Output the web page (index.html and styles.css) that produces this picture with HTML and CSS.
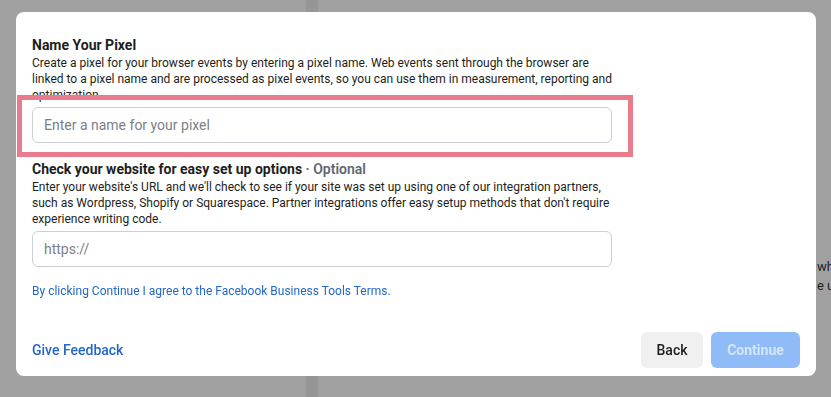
FILE: index.html
```html
<!DOCTYPE html>
<html>
<head>
<meta charset="utf-8">
<link rel="stylesheet" href="styles.css">
</head>
<body>
<div class="backdrop">
  <div class="left-area"></div>
  <div class="strip"></div>
  <div class="main-area">
    <p class="behind">wh<br>e u</p>
  </div>
</div>

<div class="modal">
  <div class="modal-body">
    <h2 class="heading">Name Your Pixel</h2>
    <p class="desc">Create a pixel for your browser events by entering a pixel name. Web events sent through the browser are linked to a pixel name and are processed as pixel events, so you can use them in measurement, reporting and optimization.</p>
    <div class="field"><input class="input" type="text" placeholder="Enter a name for your pixel"></div>

    <h2 class="heading heading-2">Check your website for easy set up options <span class="optional">· Optional</span></h2>
    <p class="desc">Enter your website's URL and we'll check to see if your site was set up using one of our integration partners, such as Wordpress, Shopify or Squarespace. Partner integrations offer easy setup methods that don't require experience writing code.</p>
    <div class="field"><input class="input" type="text" placeholder="https://"></div>

    <p class="terms">By clicking Continue I agree to the Facebook Business Tools Terms.</p>
  </div>
  <div class="modal-footer">
    <a class="feedback">Give Feedback</a>
    <div class="actions">
      <button class="btn btn-back">Back</button>
      <button class="btn btn-continue">Continue</button>
    </div>
  </div>
  <div class="highlight"></div>
</div>
</body>
</html>
```

FILE: styles.css
```css
* { box-sizing: border-box; }
html, body {
  margin: 0;
  padding: 0;
  height: 100%;
  overflow: hidden;
}
body {
  background: #a0a0a0;
  font-family: Roboto, "Liberation Sans", Arial, sans-serif;
  color: #1c1e21;
}
.backdrop {
  display: flex;
  height: 397px;
}
.left-area {
  width: 306px;
  flex: none;
}
.strip {
  width: 12px;
  flex: none;
  background: #969696;
}
.main-area {
  flex: 1;
  padding-left: 499px;
  padding-top: 257px;
  overflow: hidden;
  white-space: nowrap;
}
.behind {
  margin: 0;
  font-size: 13px;
  line-height: 19px;
  color: #1e1e1e;
}

.modal {
  position: fixed;
  top: 12px;
  left: 16px;
  width: 800px;
  height: 364px;
  background: #fff;
  border-radius: 8px;
  display: flex;
  flex-direction: column;
}
.modal-body {
  padding: 23px 16px 0 16px;
  width: 612px;
}
.heading {
  margin: 0;
  font-size: 14px;
  line-height: 20px;
  font-weight: 700;
  color: #1c1e21;
}
.heading-2 {
  margin-top: 16px;
}
.optional {
  color: #606770;
  font-weight: 600;
}
.desc {
  margin: 0;
  font-size: 12px;
  line-height: 16px;
  color: #1c1e21;
}
.field {
  margin-top: 4px;
}
.input {
  display: block;
  width: 580px;
  height: 36px;
  border: 1px solid #ccd0d5;
  border-radius: 6px;
  padding: 0 11px;
  font-family: inherit;
  font-size: 14px;
  color: #1c1e21;
  background: #fff;
  outline: none;
}
.input::placeholder {
  color: #7b7f85;
}
.terms {
  margin: 16px 0 0 0;
  font-size: 12px;
  line-height: 16px;
  color: #2368c8;
}
.modal-footer {
  margin-top: auto;
  display: flex;
  align-items: center;
  justify-content: space-between;
  padding: 0 16px 8px 16px;
}
.feedback {
  font-size: 14px;
  line-height: 20px;
  color: #2368c8;
  font-weight: 500;
}
.actions {
  display: flex;
  gap: 8px;
}
.btn {
  height: 36px;
  border: none;
  border-radius: 6px;
  font-family: inherit;
  font-size: 14px;
  padding: 0;
}
.btn-back {
  width: 62px;
  background: #f0f0f0;
  color: #1c1e21;
  font-weight: 500;
}
.btn-continue {
  width: 89px;
  background: #8fbbf6;
  color: #d4e5fc;
  font-weight: 700;
}
.highlight {
  position: absolute;
  left: 1px;
  top: 83px;
  width: 616px;
  height: 62px;
  border: 5px solid #e97b8d;
  pointer-events: none;
}
```
